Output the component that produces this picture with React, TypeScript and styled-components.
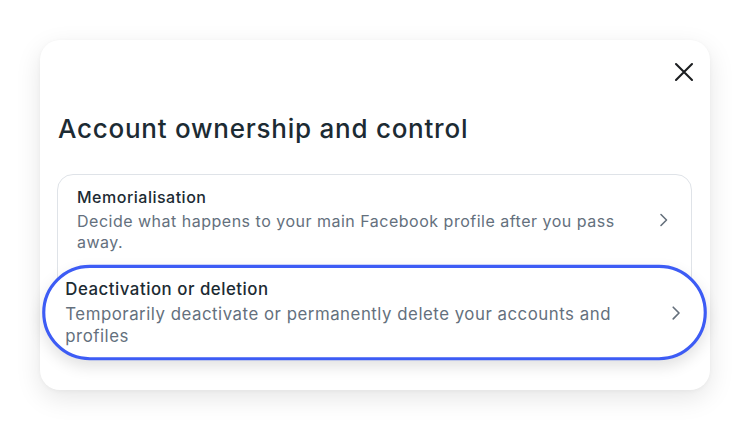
import React from 'react'
import styled, { createGlobalStyle, css } from 'styled-components';

const GlobalStyle = createGlobalStyle`
  html, body {
    margin: 0;
    padding: 0;
    background: #ffffff;
  }
  body {
    font-family: Inter, "Noto Sans", "Liberation Sans", sans-serif;
    -webkit-font-smoothing: antialiased;
  }
`;

const Page = styled.div`
  width: 750px;
  height: 431px;
  padding: 40px;
  box-sizing: border-box;
`;

const Card = styled.div`
  width: 670px;
  height: 350px;
  box-sizing: border-box;
  background: #fff;
  border-radius: 20px;
  box-shadow: 0 8px 26px rgba(0, 0, 0, 0.1), 0 1px 4px rgba(0, 0, 0, 0.04);
  padding: 20px 18px 0 17px;
  display: flex;
  flex-direction: column;
`;

const TopBar = styled.div`
  display: flex;
  justify-content: flex-end;
`;

const CloseButton = styled.button`
  width: 24px;
  height: 24px;
  padding: 0;
  margin-right: -4px;
  border: none;
  background: transparent;
  display: flex;
  align-items: center;
  justify-content: center;
  cursor: pointer;
`;

const Title = styled.h1`
  margin: 29px 0 0 1px;
  font-size: 26px;
  line-height: 32px;
  font-weight: 500;
  color: #1c2b33;
  letter-spacing: 0.75px;
`;

const List = styled.div`
  margin-top: 29px;
  border: 1px solid #dfe3e8;
  border-radius: 16px;
  display: flex;
  flex-direction: column;
`;

const Row = styled.div<{ $active?: boolean }>`
  display: flex;
  align-items: center;
  gap: 22px;
  padding: 12px 22px 12px 19px;
  & + & {
    border-top: 1px solid #dfe3e8;
  }
  ${(p) =>
    p.$active &&
    css`
      position: relative;
      z-index: 1;
      background: #fff;
      border: 3px solid #3d5cf5 !important;
      border-radius: 48px;
      margin-top: -1px;
      padding: 10px 21px 9px 19px;
      transform: translateY(3px) scale(1.05);
      box-shadow: 0 6px 14px rgba(0, 0, 0, 0.12);
    `}
`;

const RowText = styled.div`
  flex: 1;
  display: flex;
  flex-direction: column;
  gap: 4px;
`;

const RowTitle = styled.div`
  font-size: 16px;
  line-height: 20px;
  font-weight: 500;
  color: #1c2b33;
  letter-spacing: 0.5px;
`;

const RowDesc = styled.div`
  font-size: 16px;
  line-height: 21px;
  color: #64707d;
  letter-spacing: 0.5px;
`;

const Chevron = () => (
  <svg width="10" height="14" viewBox="0 0 10 14" fill="none">
    <path d="M2 1.5 L7.5 7 L2 12.5" stroke="#65707c" strokeWidth="1.6" strokeLinecap="round" strokeLinejoin="round" />
  </svg>
);

const CloseIcon = () => (
  <svg width="20" height="20" viewBox="0 0 20 20" fill="none">
    <path d="M2 2 L18 18 M18 2 L2 18" stroke="#1c1e21" strokeWidth="2.1" strokeLinecap="round" />
  </svg>
);

const items = [
  {
    title: 'Memorialisation',
    desc: 'Decide what happens to your main Facebook profile after you pass away.',
  },
  {
    title: 'Deactivation or deletion',
    desc: 'Temporarily deactivate or permanently delete your accounts and profiles',
    active: true,
  },
];

export default function App() {
  return (
    <>
      <GlobalStyle />
      <Page>
        <Card>
          <TopBar>
            <CloseButton aria-label="Close">
              <CloseIcon />
            </CloseButton>
          </TopBar>
          <Title>Account ownership and control</Title>
          <List>
            {items.map((it) => (
              <Row key={it.title} $active={it.active}>
                <RowText>
                  <RowTitle>{it.title}</RowTitle>
                  <RowDesc>{it.desc}</RowDesc>
                </RowText>
                <Chevron />
              </Row>
            ))}
          </List>
        </Card>
      </Page>
    </>
  )
}
